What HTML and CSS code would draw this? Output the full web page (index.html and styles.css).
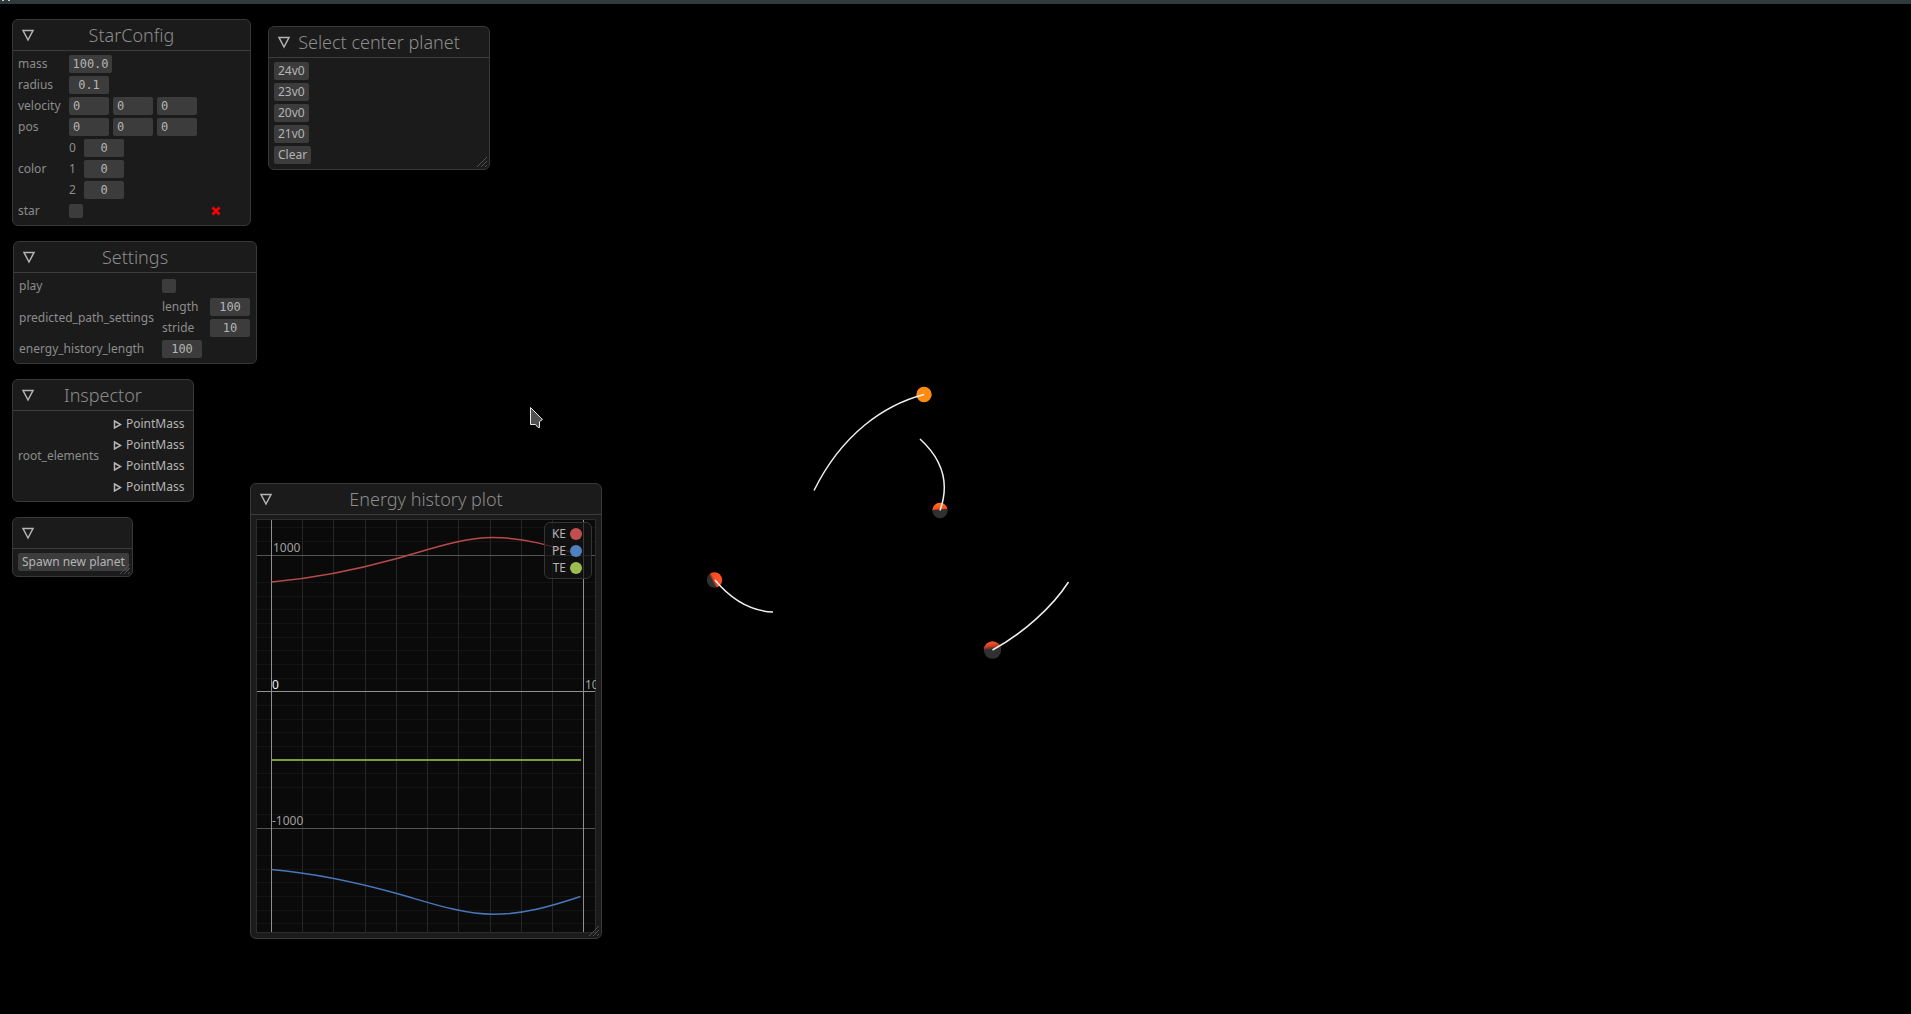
FILE: index.html
```html
<!DOCTYPE html>
<html lang="en">
<head>
<meta charset="utf-8">
<title>Planet simulation</title>
<link rel="stylesheet" href="styles.css">
</head>
<body>
<main class="desktop">
  <svg class="scene" aria-hidden="true">
    <defs>
      <linearGradient id="lit-a" x1="0.45" y1="0" x2="0.52" y2="1">
        <stop offset="0" stop-color="#ff7a1c"/><stop offset="0.4" stop-color="#fa4a16"/><stop offset="0.46" stop-color="#303030"/>
      </linearGradient>
      <linearGradient id="lit-b" x1="0.9" y1="0.3" x2="0.1" y2="0.7">
        <stop offset="0" stop-color="#ff5426"/><stop offset="0.5" stop-color="#ff4a22"/><stop offset="0.68" stop-color="#303030"/>
      </linearGradient>
      <linearGradient id="lit-c" x1="0.42" y1="0" x2="0.58" y2="1">
        <stop offset="0" stop-color="#ff5a30"/><stop offset="0.25" stop-color="#d84020"/><stop offset="0.45" stop-color="#303030"/>
      </linearGradient>
    </defs>
    <circle cx="924" cy="394.500" r="7.700" fill="#ff8c10"/>
    <circle cx="940" cy="510.500" r="7.700" fill="url(#lit-a)"/>
    <circle cx="714.500" cy="580" r="7.700" fill="url(#lit-b)"/>
    <circle cx="992.500" cy="650" r="8.700" fill="url(#lit-c)"/>
    <g class="paths">
      <path d="M924 394.500C884 405 842 434 814 490.500"/>
      <path d="M940 510.500C950 483 943 460 920 439"/>
      <path d="M715 580C730 598 749 611 773 612"/>
      <path d="M992.500 650C1024 633 1053 606 1068.500 582"/>
    </g>
    <path class="cursor" d="M530.500 407.500V424.500H535.500L538 427.500H539.500V421.500L542.500 419.500Z"/>
  </svg>

  <header class="strip"></header>

  <section class="window win-star" aria-labelledby="t-star">
    <header class="bar">
      <button class="fold" aria-label="Collapse StarConfig"><svg viewBox="0 0 14 13"><path d="M2 1.500H12L7 11Z"/></svg></button>
      <h2 id="t-star">StarConfig</h2>
    </header>
    <div class="body form form-star">
      <label for="mass">mass</label><input class="num wide" id="mass" value="100.0">
      <label for="radius">radius</label><input class="num" id="radius" value="0.1">
      <label for="vx">velocity</label>
      <div class="triple"><input class="num start" id="vx" value="0"><input class="num start" aria-label="velocity y" value="0"><input class="num start" aria-label="velocity z" value="0"></div>
      <label for="px">pos</label>
      <div class="triple"><input class="num start" id="px" value="0"><input class="num start" aria-label="pos y" value="0"><input class="num start" aria-label="pos z" value="0"></div>
      <span>color</span>
      <div class="form form-color">
        <label for="c0">0</label><input class="num" id="c0" value="0">
        <label for="c1">1</label><input class="num" id="c1" value="0">
        <label for="c2">2</label><input class="num" id="c2" value="0">
      </div>
      <label for="star">star</label>
      <div class="star-row"><input type="checkbox" class="tick" id="star">
        <button class="remove" aria-label="Remove"><svg viewBox="0 0 10 10"><path d="M1.500 1.500L8.500 8.500M8.500 1.500L1.500 8.500"/></svg></button>
      </div>
    </div>
  </section>

  <section class="window win-select" aria-labelledby="t-select">
    <header class="bar">
      <button class="fold" aria-label="Collapse Select center planet"><svg viewBox="0 0 14 13"><path d="M2 1.500H12L7 11Z"/></svg></button>
      <h2 id="t-select">Select center planet</h2>
    </header>
    <div class="body list">
      <button class="btn">24v0</button>
      <button class="btn">23v0</button>
      <button class="btn">20v0</button>
      <button class="btn">21v0</button>
      <button class="btn">Clear</button>
    </div>
    <svg class="grip" viewBox="0 0 12 12"><path d="M1 11L11 1M5 11L11 5M9 11L11 9"/></svg>
  </section>

  <section class="window win-settings" aria-labelledby="t-settings">
    <header class="bar">
      <button class="fold" aria-label="Collapse Settings"><svg viewBox="0 0 14 13"><path d="M2 1.500H12L7 11Z"/></svg></button>
      <h2 id="t-settings">Settings</h2>
    </header>
    <div class="body form form-settings">
      <label for="play">play</label><input type="checkbox" class="tick" id="play">
      <span>predicted_path_settings</span>
      <div class="form form-path">
        <label for="length">length</label><input class="num" id="length" value="100">
        <label for="stride">stride</label><input class="num" id="stride" value="10">
      </div>
      <label for="history">energy_history_length</label><input class="num" id="history" value="100">
    </div>
  </section>

  <section class="window win-inspector" aria-labelledby="t-inspector">
    <header class="bar">
      <button class="fold" aria-label="Collapse Inspector"><svg viewBox="0 0 14 13"><path d="M2 1.500H12L7 11Z"/></svg></button>
      <h2 id="t-inspector">Inspector</h2>
    </header>
    <div class="body form form-inspector">
      <span>root_elements</span>
      <div class="list">
        <button class="node"><svg viewBox="0 0 9 9"><path d="M1.500 1L7.500 4.500L1.500 8Z"/></svg>PointMass</button>
        <button class="node"><svg viewBox="0 0 9 9"><path d="M1.500 1L7.500 4.500L1.500 8Z"/></svg>PointMass</button>
        <button class="node"><svg viewBox="0 0 9 9"><path d="M1.500 1L7.500 4.500L1.500 8Z"/></svg>PointMass</button>
        <button class="node"><svg viewBox="0 0 9 9"><path d="M1.500 1L7.500 4.500L1.500 8Z"/></svg>PointMass</button>
      </div>
    </div>
  </section>

  <section class="window win-spawn" aria-label="Spawn">
    <header class="bar">
      <button class="fold" aria-label="Collapse"><svg viewBox="0 0 14 13"><path d="M2 1.500H12L7 11Z"/></svg></button>
    </header>
    <div class="body list">
      <button class="btn">Spawn new planet</button>
    </div>
    <svg class="grip" viewBox="0 0 12 12"><path d="M1 11L11 1M5 11L11 5M9 11L11 9"/></svg>
  </section>

  <section class="window win-energy" aria-labelledby="t-energy">
    <header class="bar">
      <button class="fold" aria-label="Collapse Energy history plot"><svg viewBox="0 0 14 13"><path d="M2 1.500H12L7 11Z"/></svg></button>
      <h2 id="t-energy">Energy history plot</h2>
    </header>
    <div class="body">
      <div class="plot">
        <svg class="chart" viewBox="0 0 340 414">
          <path class="minor" d="M0 8.500H340M0 22.500H340M0 63.500H340M0 77.500H340M0 90.500H340M0 104.500H340M0 118.500H340M0 131.500H340M0 145.500H340M0 159.500H340M0 186.500H340M0 200.500H340M0 213.500H340M0 227.500H340M0 254.500H340M0 268.500H340M0 295.500H340M0 336.500H340M0 350.500H340M0 363.500H340M0 377.500H340M0 391.500H340M0 404.500H340"/>
          <path class="mid" d="M46.500 0V414M77.500 0V414M109.500 0V414M140.500 0V414M171.500 0V414M202.500 0V414M234.500 0V414M265.500 0V414M296.500 0V414"/>
          <path class="major" d="M0 36.500H340M0 309.500H340"/>
          <path class="axis" d="M15.500 0V414M327.500 0V414M0 172.500H340"/>
          <rect class="frame" x="0.500" y="0.500" width="339" height="413"/>
          <path class="ke" d="M15.500 63C60 59 103 50 140 39.700C170 31.500 205 18.500 237 18.500C268 18.500 296 27 324 36"/>
          <path class="pe" d="M15.500 350.500C60 354.500 103 364 140 374.300C170 382.500 205 395.300 237 395.300C268 395.300 296 387 324.500 377.500"/>
          <path class="te" d="M15.500 241H325"/>
          <text x="17" y="33">1000</text>
          <text class="zero" x="16" y="170">0</text>
          <text x="329" y="170">100</text>
          <text x="16" y="306">-1000</text>
        </svg>
        <div class="legend">
          <label>KE<input type="checkbox" class="dot dot-ke" checked></label>
          <label>PE<input type="checkbox" class="dot dot-pe" checked></label>
          <label>TE<input type="checkbox" class="dot dot-te" checked></label>
        </div>
      </div>
    </div>
    <svg class="grip" viewBox="0 0 12 12"><path d="M1 11L11 1M5 11L11 5M9 11L11 9"/></svg>
  </section>
</main>
</body>
</html>
```
FILE: styles.css
```css
* {
  box-sizing: border-box;
}

body {
  margin: 0;
  background: #000;
  color: #8c8c8c;
  font: 400 12px/18px "Noto Sans", "Open Sans", sans-serif;
}

button,
input {
  margin: 0;
  padding: 0;
  border: 0;
  background: none;
  color: #b4b4b4;
  font: inherit;
}

.desktop {
  position: relative;
  min-height: 100vh;
  overflow: hidden;
}

.strip {
  position: relative;
  height: 4px;
  background: #30393c;
}

.strip::before {
  content: "";
  position: absolute;
  left: 2px;
  top: 0;
  width: 8px;
  height: 1px;
  background: linear-gradient(90deg, #ccc 2px, transparent 2px 6px, #ccc 6px);
}

.scene {
  position: absolute;
  inset: 0;
  width: 100%;
  height: 100%;
}

.paths path {
  fill: none;
  stroke: #f0f0f0;
  stroke-width: 1.500;
}

.cursor {
  fill: #505050;
  stroke: #e8e8e8;
}

/* Floating windows */
.window {
  position: absolute;
  border: 1px solid #383838;
  border-radius: 6px;
  background: #1b1b1b;
}

.win-star { left: 12px; top: 19px; width: 239px; }
.win-select { left: 268px; top: 26px; width: 222px; }
.win-settings { left: 13px; top: 241px; width: 244px; }
.win-inspector { left: 12px; top: 379px; width: 182px; }
.win-spawn { left: 12px; top: 517px; width: 121px; }
.win-energy { left: 250px; top: 483px; width: 352px; }

.bar {
  position: relative;
  display: flex;
  align-items: center;
  justify-content: center;
  height: 31px;
  border-bottom: 1px solid #3c3c3c;
}

.bar h2 {
  margin: 0;
  font-size: 18px;
  font-weight: 300;
  line-height: 30px;
}

.fold {
  position: absolute;
  left: 8px;
  top: 9px;
  width: 14px;
  height: 13px;
}

.fold svg {
  display: block;
  fill: none;
  stroke: #b4b4b4;
  stroke-width: 1.500;
}

.body {
  padding: 4px 5px 5px;
}

.form {
  display: grid;
  gap: 3px 0;
  align-items: center;
}

.form-star { grid-template-columns: 51px 1fr; }
.form-color { grid-template-columns: 15px 1fr; }
.form-settings { grid-template-columns: 143px 1fr; }
.form-path { grid-template-columns: 48px 1fr; }
.form-inspector { grid-template-columns: 95px 1fr; }

.num {
  width: 40px;
  height: 18px;
  border-radius: 2px;
  background: #3c3c3c;
  font: 12px/18px "DejaVu Sans Mono", monospace;
  text-align: center;
}

.num.wide {
  width: 43px;
}

.num.start {
  padding-left: 4px;
  text-align: left;
}

.triple {
  display: flex;
  gap: 4px;
}

.tick {
  appearance: none;
  width: 14px;
  height: 14px;
  margin: 2px 0;
  border-radius: 2px;
  background: #3c3c3c;
}

.star-row {
  display: flex;
  align-items: center;
  justify-content: space-between;
  padding-right: 24px;
}

.remove {
  width: 10px;
  height: 10px;
}

.remove svg {
  display: block;
  stroke: #f00;
  stroke-width: 2.500;
}

.list {
  display: flex;
  flex-direction: column;
  align-items: flex-start;
  gap: 3px;
}

.btn {
  height: 18px;
  padding: 0 4px;
  border-radius: 2px;
  background: #3c3c3c;
  white-space: nowrap;
}

.node {
  display: flex;
  align-items: center;
  gap: 4px;
  height: 18px;
}

.node svg {
  width: 9px;
  height: 9px;
  fill: none;
  stroke: #b4b4b4;
  stroke-width: 1.500;
}

.grip {
  position: absolute;
  right: 1px;
  bottom: 1px;
  width: 12px;
  height: 12px;
  fill: none;
  stroke: #505050;
}

/* Energy plot */
.plot {
  position: relative;
  background: #0a0a0a;
}

.chart {
  display: block;
  width: 100%;
  fill: none;
}

.minor { stroke: #141414; }
.mid { stroke: #262626; }
.major { stroke: #555; }
.axis { stroke: #909090; }
.frame { stroke: #2c2c2c; }
.ke { stroke: #b94a4a; stroke-width: 1.500; }
.pe { stroke: #4878ba; stroke-width: 1.500; }
.te { stroke: #7c9c3c; stroke-width: 2; }

.chart text {
  fill: #a0a0a0;
  font-size: 12px;
}

.chart .zero {
  fill: #f0f0f0;
}

.legend {
  position: absolute;
  top: 3px;
  right: 4px;
  width: 48px;
  padding: 2px 9px 2px 7px;
  border: 1px solid #343434;
  border-radius: 6px;
  background: rgb(18 18 18 / 70%);
  color: #b4b4b4;
}

.legend label {
  display: flex;
  align-items: center;
  justify-content: flex-end;
  gap: 4px;
  line-height: 17px;
}

.dot {
  appearance: none;
  flex: none;
  width: 12px;
  height: 12px;
  border-radius: 50%;
}

.dot-ke { background: #c05050; }
.dot-pe { background: #5080c0; }
.dot-te { background: #9cbc50; }
```
